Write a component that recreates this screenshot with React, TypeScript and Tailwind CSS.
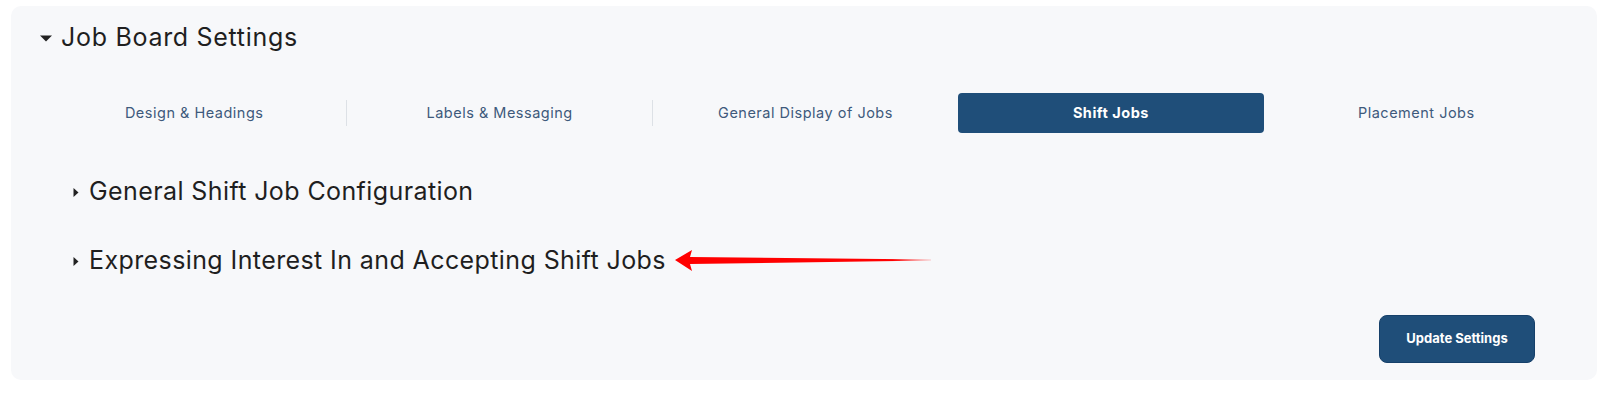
import React from "react";

const tabs = [
    "Design & Headings",
    "Labels & Messaging",
    "General Display of Jobs",
    "Shift Jobs",
    "Placement Jobs",
];
const ACTIVE = 3;

const CaretDown = () => (
    <svg width="12" height="7" viewBox="0 0 12 7" className="shrink-0">
        <path d="M0 0.5 L12 0.5 L6 6.5 Z" fill="#222" />
    </svg>
);

const CaretRight = () => (
    <svg width="6" height="9" viewBox="0 0 6 9" className="shrink-0">
        <path d="M0.5 0 L5.5 4.5 L0.5 9 Z" fill="#222" />
    </svg>
);

// red annotation arrow, tip on the left
const RedArrow = () => (
    <svg width="258" height="22" viewBox="0 0 258 22">
        <defs>
            <linearGradient id="fade" x1="0" x2="1" y1="0" y2="0">
                <stop offset="0" stopColor="#ff0000" />
                <stop offset="0.85" stopColor="#ff0000" />
                <stop offset="1" stopColor="#ff0000" stopOpacity="0.2" />
            </linearGradient>
        </defs>
        <path
            d="M0 10 L17 0 L15 7 L256 9.6 L256 10.4 L15 14 L17 21 Z"
            fill="url(#fade)"
        />
    </svg>
);

const Section = ({ title, arrow }: { title: string; arrow?: boolean }) => (
    <div className="relative flex items-center h-[40px] pl-[62px] gap-[10px]">
        <CaretRight />
        <span className="text-[25px] tracking-[0.4px] text-[#1f1f1f]">
            {title}
        </span>
        {arrow && (
            <div className="absolute left-[664px] top-[9px]">
                <RedArrow />
            </div>
        )}
    </div>
);

export default function App() {
    return (
        <div
            className="w-full h-[403px] bg-white pt-[6px] pl-[11px] pr-[3px]"
            style={{ fontFamily: "Inter, 'Noto Sans', sans-serif" }}
        >
            <div className="bg-[#f7f8fa] rounded-[10px] h-[374px] flex flex-col">
                <div className="flex items-center h-[36px] mt-[14px] pl-[29px] gap-[9px]">
                    <CaretDown />
                    <span className="text-[25px] tracking-[0.7px] text-[#1f1f1f]">
                        Job Board Settings
                    </span>
                </div>

                <div className="grid grid-cols-5 h-[40px] mt-[37px] ml-[31px] mr-[28px]">
                    {tabs.map((t, i) => (
                        <div
                            key={t}
                            className={`flex items-center justify-center ${
                                i === ACTIVE
                                    ? "bg-[#1f4e79] rounded-[4px] text-white font-bold"
                                    : "text-[#3e5a7c]"
                            } ${
                                i < 2 ? "border-r border-[#dde1e6] my-[7px]" : ""
                            }`}
                        >
                            <span className="text-[14.5px] tracking-[0.5px]">
                                {t}
                            </span>
                        </div>
                    ))}
                </div>

                <div className="mt-[39px] flex flex-col gap-[29px]">
                    <Section title="General Shift Job Configuration" />
                    <Section
                        title="Expressing Interest In and Accepting Shift Jobs"
                        arrow
                    />
                </div>

                <button className="self-end mr-[62px] mt-[34px] w-[156px] h-[48px] rounded-[8px] bg-[#1f4e79] border border-[#16406a] text-white text-[13px] font-bold">
                    Update Settings
                </button>
            </div>
        </div>
    );
}
